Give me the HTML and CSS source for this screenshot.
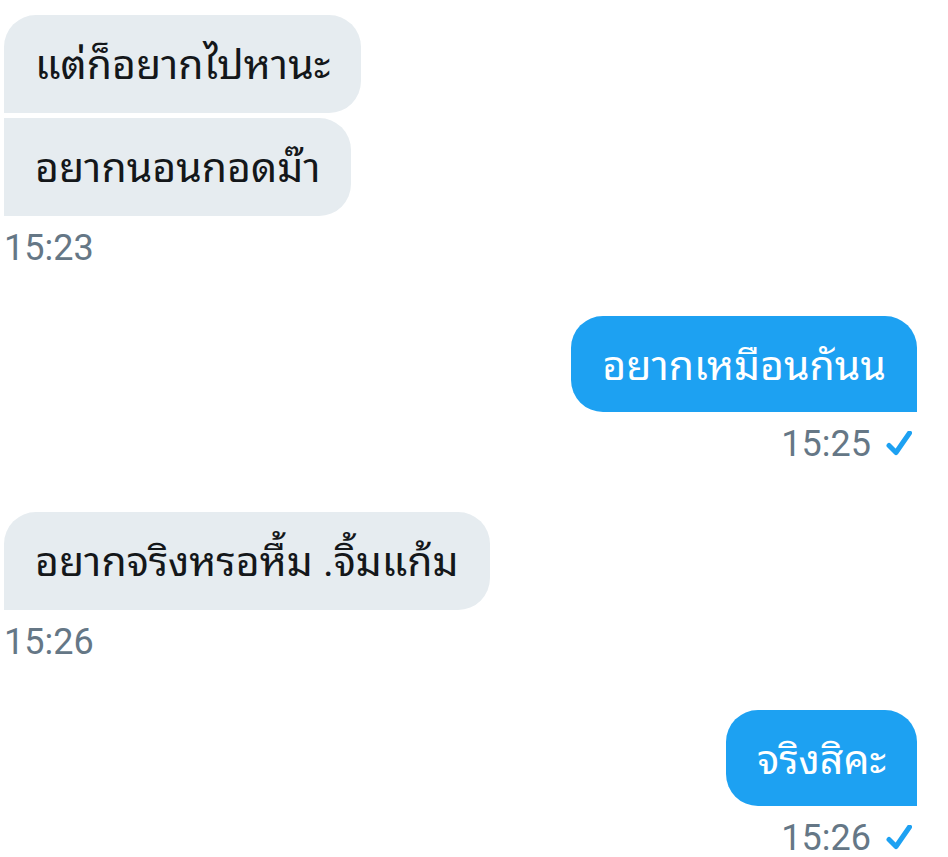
FILE: index.html
```html
<!DOCTYPE html>
<html lang="th">
<head>
<meta charset="utf-8">
<meta name="viewport" content="width=device-width, initial-scale=1">
<title>แชต</title>
<link rel="stylesheet" href="styles.css">
</head>
<body>
<main class="chat">
  <section class="group received">
    <p class="bubble">แต่ก็อยากไปหานะ</p>
    <p class="bubble joined">อยากนอนกอดม๊า</p>
    <div class="meta"><time>15:23</time></div>
  </section>
  <section class="group sent">
    <p class="bubble">อยากเหมือนกันน</p>
    <div class="meta"><time>15:25</time><svg class="check" viewBox="0 0 26 26" aria-hidden="true"><path d="M3 14.500L10 21.500L23.500 2"/></svg></div>
  </section>
  <section class="group received">
    <p class="bubble">อยากจริงหรอหื้ม .จิ้มแก้ม</p>
    <div class="meta"><time>15:26</time></div>
  </section>
  <section class="group sent">
    <p class="bubble">จริงสิคะ</p>
    <div class="meta"><time>15:26</time><svg class="check" viewBox="0 0 26 26" aria-hidden="true"><path d="M3 14.500L10 21.500L23.500 2"/></svg></div>
  </section>
</main>
</body>
</html>
```
FILE: styles.css
```css
* { box-sizing: border-box; }

body {
  margin: 0;
  background: #fff;
  color: #14171a;
  font-family: Roboto, "Noto Sans Thai Looped", "Droid Sans Thai", Loma, Garuda, Waree, "Noto Sans Thai", sans-serif;
}

.chat {
  display: flex;
  flex-direction: column;
  gap: 50px;
  padding: 15px 31px 0 4px;
}

.group {
  display: flex;
  flex-direction: column;
  align-items: flex-start;
}

.sent { align-items: flex-end; }

.bubble {
  margin: 0;
  padding: 25px 31px 23px;
  border-radius: 32px 32px 32px 0;
  background: #e6ecf0;
  font-size: 41px;
  line-height: 50px;
}

.joined {
  margin-top: 5px;
  border-top-left-radius: 0;
}

.sent .bubble {
  padding: 25px 31px 21px;
  border-radius: 32px 32px 0 32px;
  background: #1da1f2;
  color: #fff;
}

.meta {
  display: flex;
  align-items: center;
  gap: 15px;
  padding-top: 14px;
  color: #657786;
  font-size: 36px;
  line-height: 36px;
}

.sent .meta { padding-right: 5px; }

.check {
  width: 26px;
  height: 26px;
  fill: none;
  stroke: #1da1f2;
  stroke-width: 5;
  stroke-linecap: round;
  stroke-linejoin: round;
}
```
